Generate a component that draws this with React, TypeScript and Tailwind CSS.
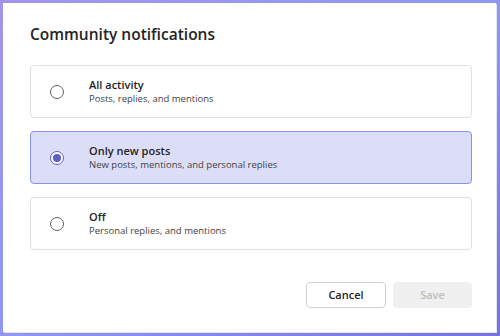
import { useState } from "react";

const options = [
  { id: "all", title: "All activity", desc: "Posts, replies, and mentions" },
  { id: "new", title: "Only new posts", desc: "New posts, mentions, and personal replies" },
  { id: "off", title: "Off", desc: "Personal replies, and mentions" },
];

function Radio({ checked }: { checked: boolean }) {
  if (checked) {
    return (
      <span className="flex h-[14px] w-[14px] items-center justify-center rounded-full border border-[#5b5fc7] bg-white">
        <span className="h-[8px] w-[8px] rounded-full bg-[#5b5fc7]" />
      </span>
    );
  }
  return <span className="h-[14px] w-[14px] rounded-full border border-[#616161] bg-white" />;
}

export default function App() {
  const [selected, setSelected] = useState("new");

  return (
    <div className="h-[336px] w-[500px] bg-gradient-to-br from-[#a094ea] via-[#8f98f0] to-[#7673de] pb-[4px] pl-[3px] pr-[4px] pt-[3px] font-['Open_Sans',sans-serif]">
      <div className="flex h-full flex-col bg-white pl-[27px] pr-[24px] pt-[20px] shadow-[1px_1px_0_#e4e4f4]">
        <h2 className="text-[15.5px] font-semibold leading-[22px] text-[#242424]">
          Community notifications
        </h2>
        <div className="mt-[20px] flex flex-col gap-[13px]">
          {options.map((o) => {
            const checked = selected === o.id;
            return (
              <button
                key={o.id}
                type="button"
                onClick={() => setSelected(o.id)}
                className={
                  checked
                    ? "flex h-[53px] items-center rounded-[4px] border border-[#8c90e0] bg-[#dcdef8] text-left"
                    : "flex h-[53px] items-center rounded-[4px] border border-[#e0e0e0] bg-white text-left"
                }
              >
                <span className="ml-[19px] flex w-[14px]">
                  <Radio checked={checked} />
                </span>
                <span className="ml-[25px] flex flex-col">
                  <span className="text-[11px] font-semibold leading-[15px] text-[#242424]">
                    {o.title}
                  </span>
                  <span className="text-[9.5px] leading-[14px] text-[#424242]">{o.desc}</span>
                </span>
              </button>
            );
          })}
        </div>
        <div className="mt-auto mb-[24px] flex justify-end gap-[7px]">
          <button
            type="button"
            className="h-[26px] w-[80px] rounded-[4px] border border-[#d1d1d1] bg-white text-[11px] font-semibold text-[#242424]"
          >
            Cancel
          </button>
          <button
            type="button"
            disabled
            className="h-[26px] w-[79px] rounded-[4px] bg-[#f0f0f0] text-[11px] font-semibold text-[#bdbdbd]"
          >
            Save
          </button>
        </div>
      </div>
    </div>
  );
}
